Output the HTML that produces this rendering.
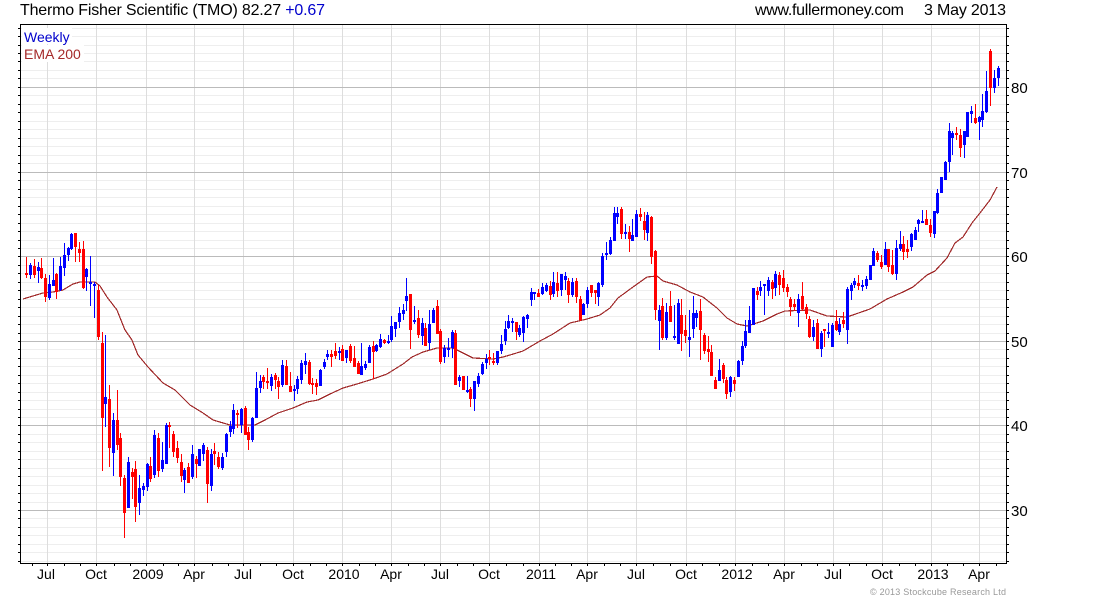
<!DOCTYPE html>
<html><head><meta charset="utf-8"><title>TMO</title>
<style>
html,body{margin:0;padding:0;background:#fff;width:1100px;height:600px;overflow:hidden}
svg{display:block}
text{font-family:"Liberation Sans",Arial,sans-serif}
</style></head><body>
<svg width="1100" height="600" viewBox="0 0 1100 600" xmlns="http://www.w3.org/2000/svg">
<g shape-rendering="crispEdges" fill="none">
<!-- minor horizontal -->
<path stroke="#eeeeee" d="M20 28.5H1006M20 36.5H1006M20 45.5H1006M20 53.5H1006M20 61.5H1006M20 70.5H1006M20 78.5H1006M20 95.5H1006M20 104.5H1006M20 112.5H1006M20 121.5H1006M20 129.5H1006M20 138.5H1006M20 146.5H1006M20 155.5H1006M20 163.5H1006M20 180.5H1006M20 189.5H1006M20 197.5H1006M20 206.5H1006M20 214.5H1006M20 223.5H1006M20 231.5H1006M20 240.5H1006M20 248.5H1006M20 265.5H1006M20 273.5H1006M20 282.5H1006M20 290.5H1006M20 299.5H1006M20 307.5H1006M20 316.5H1006M20 324.5H1006M20 333.5H1006M20 349.5H1006M20 358.5H1006M20 366.5H1006M20 375.5H1006M20 383.5H1006M20 392.5H1006M20 400.5H1006M20 409.5H1006M20 417.5H1006M20 434.5H1006M20 442.5H1006M20 451.5H1006M20 459.5H1006M20 468.5H1006M20 476.5H1006M20 485.5H1006M20 493.5H1006M20 502.5H1006M20 518.5H1006M20 527.5H1006M20 535.5H1006M20 544.5H1006M20 552.5H1006M20 561.5H1006"/>
<!-- vertical -->
<path stroke="#dddddd" d="M47.5 24V563M96.5 24V563M146.5 24V563M194.5 24V563M243.5 24V563M293.5 24V563M342.5 24V563M391.5 24V563M440.5 24V563M489.5 24V563M539.5 24V563M587.5 24V563M636.5 24V563M686.5 24V563M735.5 24V563M784.5 24V563M833.5 24V563M882.5 24V563M931.5 24V563M979.5 24V563"/>
<!-- major horizontal -->
<path stroke="#bbbbbb" d="M20 87.5H1006M20 172.5H1006M20 256.5H1006M20 341.5H1006M20 425.5H1006M20 510.5H1006"/>
</g>
<!-- EMA -->
<polyline fill="none" stroke="#a02a2a" stroke-width="1.2" stroke-linejoin="round" shape-rendering="crispEdges" points="23,299 33,296 43,293 53,292 63,290 73,284 80,282 95,282 100,286 107,297 117,310 125,330 132,340 138,355 148,367 163,383 175,390 190,405 203,413 213,420 230,425 255,425 265,420 278,413 293,408 307,402 318,400 330,394 343,388 357,384 373,379 387,374 403,364 412,357 423,352 437,348 453,348 463,353 473,358 493,359 503,357 510,355 523,351 540,341 553,334 570,323 587,319 600,315 610,308 618,298 633,287 647,277 657,276 663,281 677,285 690,292 703,297 717,308 727,318 737,324 747,326 763,321 777,314 785,311 810,310 827,316 847,317 870,309 887,299 903,292 913,287 927,275 935,271 947,258 955,243 963,237 972,223 980,213 990,200 997,187"/>
<g shape-rendering="crispEdges" fill="none">
<!-- blue wicks -->
<path stroke="#0000ff" d="M30.5 263V279M38.5 262V283M49.5 275V300M53.5 258V286M60.5 257V291M64.5 243V276M68.5 247V261M71.5 233V250M86.5 268V291M90.5 256V306M94.5 282V318M105.5 335V427M113.5 413V476M128.5 457V508M139.5 475V515M143.5 483V496M147.5 463V491M154.5 430V478M162.5 442V472M166.5 423V464M184.5 468V493M192.5 445V479M199.5 449V466M203.5 443V461M211.5 449V491M222.5 453V470M226.5 433V457M230.5 421V437M233.5 404V434M241.5 408V433M252.5 417V442M256.5 372V418M260.5 375V393M271.5 374V391M282.5 360V387M294.5 385V401M297.5 376V394M301.5 360V384M305.5 353V374M320.5 369V386M324.5 359V369M327.5 350V360M339.5 347V360M346.5 350V363M361.5 343V375M365.5 361V370M369.5 345V363M376.5 344V352M380.5 334V348M388.5 335V344M391.5 316V342M395.5 322V337M399.5 307V328M403.5 304V320M406.5 278V311M414.5 306V324M422.5 318V345M429.5 310V350M433.5 308V323M444.5 345V363M448.5 338V357M452.5 330V358M459.5 375V387M467.5 376V393M474.5 381V411M478.5 373V387M482.5 362V375M486.5 354V369M497.5 351V365M501.5 335V354M505.5 321V345M508.5 315V329M512.5 318V332M519.5 325V337M523.5 316V342M527.5 314V328M531.5 288V306M534.5 292V300M542.5 283V295M546.5 283V292M553.5 272V297M561.5 274V296M565.5 272V290M572.5 278V297M583.5 303V315M587.5 287V308M598.5 282V306M602.5 253V287M606.5 242V260M610.5 237V255M614.5 207V241M617.5 207V224M625.5 224V239M632.5 219V241M636.5 210V237M647.5 212V241M659.5 305V350M666.5 303V340M674.5 305V340M678.5 299V344M689.5 310V357M693.5 296V338M696.5 310V327M719.5 359V381M730.5 376V397M738.5 360V377M742.5 341V365M745.5 320V348M749.5 306V333M753.5 288V325M760.5 281V296M764.5 284V315M768.5 277V296M775.5 271V296M798.5 294V327M813.5 320V341M821.5 331V357M828.5 323V338M832.5 323V347M839.5 318V335M847.5 287V344M851.5 283V300M854.5 278V288M862.5 280V291M866.5 276V289M870.5 265V280M873.5 248V266M885.5 242V265M896.5 240V280M900.5 231V251M911.5 233V251M915.5 227V240M918.5 219V232M922.5 210V223M934.5 211V238M937.5 189V214M941.5 177V193M945.5 161V180M949.5 123V172M952.5 131V155M964.5 131V158M967.5 112V137M971.5 106V123M979.5 116V140M982.5 94V127M986.5 71V113M994.5 70V93M998.5 66V86"/>
<!-- blue bodies -->
<path stroke="#0000ff" stroke-width="3" d="M30.5 265V275M38.5 267V271M49.5 284V298M53.5 280V286M60.5 266V290M64.5 255V268M68.5 248V255M71.5 234V249M86.5 269V277M90.5 282V284M94.5 284V286M105.5 397V404M113.5 420V453M128.5 462V508M139.5 488V503M143.5 486V490M147.5 464V487M154.5 435V475M162.5 460V469M166.5 425V464M184.5 470V480M192.5 454V477M199.5 449V466M203.5 445V454M211.5 454V486M222.5 457V468M226.5 434V452M230.5 426V432M233.5 410V429M241.5 409V425M252.5 418V440M256.5 388V418M260.5 381V388M271.5 377V386M282.5 365V385M294.5 389V391M297.5 379V389M301.5 363V380M305.5 361V365M320.5 370V386M324.5 362V367M327.5 354V357M339.5 351V353M346.5 350V358M361.5 366V375M365.5 364V368M369.5 347V363M376.5 345V351M380.5 339V347M388.5 341V343M391.5 326V340M395.5 322V329M399.5 313V322M403.5 310V314M406.5 296V301M414.5 320V322M422.5 323V336M429.5 324V343M433.5 310V323M444.5 348V357M448.5 348V350M452.5 332V348M459.5 377V381M467.5 390V392M474.5 381V399M478.5 376V384M482.5 364V374M486.5 359V363M497.5 351V363M501.5 344V351M505.5 329V341M508.5 321V328M512.5 321V323M519.5 328V335M523.5 317V333M527.5 315V319M531.5 292V300M534.5 292V294M542.5 287V294M546.5 285V291M553.5 282V294M561.5 274V290M565.5 276V280M572.5 282V295M583.5 304V315M587.5 290V304M598.5 283V297M602.5 256V285M606.5 253V255M610.5 240V254M614.5 213V241M617.5 213V217M625.5 232V234M632.5 235V241M636.5 214V237M647.5 215V233M659.5 310V321M666.5 312V338M674.5 336V338M678.5 303V344M689.5 337V340M693.5 313V329M696.5 313V318M719.5 370V381M730.5 377V392M738.5 361V377M742.5 346V361M745.5 331V346M749.5 320V333M753.5 288V325M760.5 287V291M764.5 284V286M768.5 280V291M775.5 274V288M798.5 299V313M813.5 327V337M821.5 333V349M828.5 332V334M832.5 325V347M839.5 324V332M847.5 289V330M851.5 285V291M854.5 281V285M862.5 285V287M866.5 279V286M870.5 265V280M873.5 251V266M885.5 249V265M896.5 248V274M900.5 244V249M911.5 234V247M915.5 230V240M918.5 220V224M922.5 221V223M934.5 211V234M937.5 193V213M941.5 177V193M945.5 162V180M949.5 131V162M952.5 133V138M964.5 131V145M967.5 112V137M971.5 111V114M979.5 117V122M982.5 111V120M986.5 91V112M994.5 78V88M998.5 68V78"/>
<!-- red wicks -->
<path stroke="#ff0000" d="M26.5 257V278M34.5 259V278M41.5 258V279M45.5 274V302M56.5 273V299M75.5 233V262M79.5 242V262M83.5 241V289M98.5 285V340M102.5 332V471M109.5 385V467M117.5 390V450M120.5 433V486M124.5 475V538M132.5 468V499M135.5 461V522M150.5 457V482M158.5 433V477M169.5 422V448M173.5 431V457M177.5 441V463M181.5 454V482M188.5 463V483M196.5 456V478M207.5 447V503M214.5 443V465M218.5 452V469M237.5 410V428M245.5 406V435M248.5 427V450M263.5 375V389M267.5 368V389M275.5 373V389M278.5 377V399M286.5 360V385M290.5 372V392M309.5 360V385M312.5 378V394M316.5 379V395M331.5 350V367M335.5 343V359M342.5 345V361M350.5 344V363M354.5 346V367M358.5 361V374M373.5 341V379M384.5 339V344M410.5 294V349M418.5 310V338M425.5 323V346M437.5 300V334M440.5 329V364M455.5 330V385M463.5 376V390M470.5 387V407M489.5 350V365M493.5 353V365M516.5 322V340M538.5 289V297M550.5 281V300M557.5 272V297M568.5 278V303M576.5 278V303M580.5 296V321M591.5 285V297M595.5 290V304M621.5 207V239M629.5 226V252M640.5 208V221M644.5 212V240M651.5 216V264M655.5 250V320M662.5 298V340M670.5 291V322M681.5 299V351M685.5 315V343M700.5 299V360M704.5 333V354M708.5 336V362M711.5 345V376M715.5 377V389M723.5 363V383M726.5 377V399M734.5 377V391M757.5 287V300M772.5 280V299M779.5 272V295M783.5 270V292M787.5 284V297M790.5 297V316M794.5 299V311M802.5 282V311M806.5 304V319M809.5 316V338M817.5 319V349M824.5 329V347M836.5 310V331M843.5 312V328M858.5 275V290M877.5 251V262M881.5 255V269M888.5 249V272M892.5 250V275M903.5 236V260M907.5 240V258M926.5 210V225M930.5 219V237M956.5 127V140M960.5 129V157M975.5 104V124M990.5 49V106"/>
<!-- red bodies -->
<path stroke="#ff0000" stroke-width="3" d="M26.5 273V275M34.5 266V275M41.5 268V278M45.5 278V297M56.5 274V292M75.5 233V247M79.5 249V253M83.5 249V288M98.5 290V337M102.5 343V418M109.5 399V448M117.5 420V445M120.5 438V477M124.5 478V513M132.5 472V477M135.5 469V507M150.5 466V479M158.5 438V471M169.5 425V427M173.5 434V452M177.5 448V458M181.5 462V476M188.5 467V483M196.5 459V464M207.5 450V484M214.5 451V454M218.5 457V467M237.5 413V415M245.5 408V435M248.5 432V440M263.5 377V382M267.5 381V383M275.5 375V380M278.5 381V387M286.5 366V385M290.5 386V392M309.5 362V384M312.5 383V385M316.5 383V387M331.5 354V357M335.5 351V356M342.5 349V361M350.5 346V361M354.5 358V367M358.5 363V374M373.5 346V352M384.5 340V343M410.5 294V330M418.5 318V335M425.5 328V346M437.5 306V334M440.5 331V362M455.5 333V385M463.5 376V390M470.5 389V399M489.5 357V359M493.5 361V363M516.5 322V332M538.5 293V297M550.5 286V295M557.5 283V291M568.5 281V295M576.5 281V297M580.5 299V320M591.5 285V293M595.5 290V293M621.5 209V234M629.5 232V239M640.5 214V217M644.5 221V230M651.5 217V257M655.5 251V310M662.5 306V338M670.5 306V322M681.5 315V334M685.5 330V336M700.5 311V330M704.5 335V351M708.5 349V352M711.5 352V376M715.5 380V389M723.5 365V379M726.5 380V394M734.5 380V384M757.5 291V295M772.5 282V289M779.5 275V285M783.5 278V288M787.5 287V292M790.5 299V307M794.5 304V307M802.5 296V309M806.5 307V314M809.5 319V337M817.5 323V349M824.5 329V331M836.5 321V330M843.5 320V324M858.5 283V286M877.5 253V260M881.5 262V267M888.5 249V267M892.5 265V274M903.5 244V252M907.5 249V252M926.5 219V225M930.5 225V233M956.5 133V135M960.5 135V148M975.5 118V123M990.5 51V88"/>
<!-- axes and ticks -->
<path stroke="#000" d="M18 28.5H20M18 36.5H20M18 45.5H20M18 53.5H20M18 61.5H20M18 70.5H20M18 78.5H20M18 87.5H20M18 95.5H20M18 104.5H20M18 112.5H20M18 121.5H20M18 129.5H20M18 138.5H20M18 146.5H20M18 155.5H20M18 163.5H20M18 172.5H20M18 180.5H20M18 189.5H20M18 197.5H20M18 206.5H20M18 214.5H20M18 223.5H20M18 231.5H20M18 240.5H20M18 248.5H20M18 256.5H20M18 265.5H20M18 273.5H20M18 282.5H20M18 290.5H20M18 299.5H20M18 307.5H20M18 316.5H20M18 324.5H20M18 333.5H20M18 341.5H20M18 349.5H20M18 358.5H20M18 366.5H20M18 375.5H20M18 383.5H20M18 392.5H20M18 400.5H20M18 409.5H20M18 417.5H20M18 425.5H20M18 434.5H20M18 442.5H20M18 451.5H20M18 459.5H20M18 468.5H20M18 476.5H20M18 485.5H20M18 493.5H20M18 502.5H20M18 510.5H20M18 518.5H20M18 527.5H20M18 535.5H20M18 544.5H20M18 552.5H20M18 561.5H20"/>
<path stroke="#000" d="M1006 28.5H1009M1006 36.5H1009M1006 45.5H1009M1006 53.5H1009M1006 61.5H1009M1006 70.5H1009M1006 78.5H1009M1006 87.5H1009M1006 95.5H1009M1006 104.5H1009M1006 112.5H1009M1006 121.5H1009M1006 129.5H1009M1006 138.5H1009M1006 146.5H1009M1006 155.5H1009M1006 163.5H1009M1006 172.5H1009M1006 180.5H1009M1006 189.5H1009M1006 197.5H1009M1006 206.5H1009M1006 214.5H1009M1006 223.5H1009M1006 231.5H1009M1006 240.5H1009M1006 248.5H1009M1006 256.5H1009M1006 265.5H1009M1006 273.5H1009M1006 282.5H1009M1006 290.5H1009M1006 299.5H1009M1006 307.5H1009M1006 316.5H1009M1006 324.5H1009M1006 333.5H1009M1006 341.5H1009M1006 349.5H1009M1006 358.5H1009M1006 366.5H1009M1006 375.5H1009M1006 383.5H1009M1006 392.5H1009M1006 400.5H1009M1006 409.5H1009M1006 417.5H1009M1006 425.5H1009M1006 434.5H1009M1006 442.5H1009M1006 451.5H1009M1006 459.5H1009M1006 468.5H1009M1006 476.5H1009M1006 485.5H1009M1006 493.5H1009M1006 502.5H1009M1006 510.5H1009M1006 518.5H1009M1006 527.5H1009M1006 535.5H1009M1006 544.5H1009M1006 552.5H1009M1006 561.5H1009"/>
<path stroke="#000" d="M32.5 563V566M47.5 563V566M64.5 563V566M80.5 563V566M96.5 563V566M114.5 563V566M130.5 563V566M146.5 563V566M163.5 563V566M178.5 563V566M194.5 563V566M212.5 563V566M228.5 563V566M243.5 563V566M260.5 563V566M276.5 563V566M293.5 563V566M310.5 563V566M326.5 563V566M342.5 563V566M359.5 563V566M375.5 563V566M391.5 563V566M408.5 563V566M424.5 563V566M440.5 563V566M457.5 563V566M473.5 563V566M489.5 563V566M506.5 563V566M523.5 563V566M539.5 563V566M555.5 563V566M571.5 563V566M587.5 563V566M604.5 563V566M620.5 563V566M636.5 563V566M653.5 563V566M670.5 563V566M686.5 563V566M702.5 563V566M719.5 563V566M735.5 563V566M752.5 563V566M768.5 563V566M784.5 563V566M801.5 563V566M817.5 563V566M833.5 563V566M849.5 563V566M866.5 563V566M882.5 563V566M899.5 563V566M915.5 563V566M931.5 563V566M947.5 563V566M963.5 563V566M979.5 563V566M996.5 563V566"/>
<rect x="20.5" y="24.5" width="986" height="539" stroke="#000" stroke-width="1"/>
</g>
<!-- legend -->
<rect x="22" y="28" width="50" height="16" fill="#fff"/>
<rect x="22" y="45" width="62" height="17" fill="#fff"/>
<text x="24" y="42" font-size="14" fill="#0000cc">Weekly</text>
<text x="24" y="59" font-size="14" fill="#a52a2a">EMA 200</text>
<!-- header -->
<text x="20" y="15" font-size="16" fill="#000" textLength="305" lengthAdjust="spacing">Thermo Fisher Scientific (TMO) 82.27 <tspan fill="#0000cc">+0.67</tspan></text>
<text x="755" y="15" font-size="16" fill="#000" textLength="149" lengthAdjust="spacing">www.fullermoney.com</text>
<text x="924" y="15" font-size="16" fill="#000" textLength="82" lengthAdjust="spacing">3 May 2013</text>
<!-- y labels -->
<g font-size="15" fill="#000">
<text x="1011" y="93">80</text><text x="1011" y="178">70</text><text x="1011" y="262">60</text><text x="1011" y="347">50</text><text x="1011" y="431">40</text><text x="1011" y="516">30</text>
</g>
<!-- x labels -->
<g font-size="14" fill="#000" text-anchor="middle">
<text x="46" y="579">Jul</text><text x="96" y="579">Oct</text><text x="148" y="579">2009</text><text x="194" y="579">Apr</text><text x="243" y="579">Jul</text><text x="293" y="579">Oct</text><text x="344" y="579">2010</text><text x="391" y="579">Apr</text><text x="440" y="579">Jul</text><text x="489" y="579">Oct</text><text x="541" y="579">2011</text><text x="587" y="579">Apr</text><text x="636" y="579">Jul</text><text x="686" y="579">Oct</text><text x="737" y="579">2012</text><text x="784" y="579">Apr</text><text x="833" y="579">Jul</text><text x="882" y="579">Oct</text><text x="933" y="579">2013</text><text x="979" y="579">Apr</text>
</g>
<text x="870" y="595" font-size="9" fill="#999999" textLength="136" lengthAdjust="spacing">© 2013 Stockcube Research Ltd</text>
</svg>
</body></html>
